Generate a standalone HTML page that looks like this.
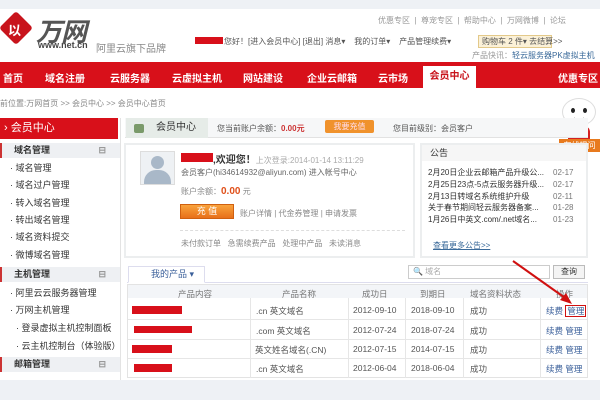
<!DOCTYPE html>
<html><head><meta charset="utf-8"><style>
*{margin:0;padding:0;box-sizing:border-box}
body{width:600px;height:400px;overflow:hidden;background:#fff;font-family:"Liberation Sans","Noto Sans CJK SC",sans-serif;font-size:9px;color:#444;position:relative}
.a{position:absolute;white-space:nowrap}
.nav span{position:absolute;top:70px;color:#fff;font-weight:bold;font-size:10px}
.side div{position:absolute;left:0;width:120px;height:17px;line-height:17px;padding-left:10px;font-size:9px;color:#333}
.side .h{background:#eef0f3;font-weight:bold;padding-left:12px;border-left:2px solid #c33;height:15px;line-height:15px}
.side .h:after{content:"⊟";position:absolute;right:14px;color:#999}
.red{background:#d8101a}
.th{position:absolute;top:288px;color:#777;font-size:8.5px}
.td{position:absolute;color:#555;font-size:8.5px}
.lk{color:#3a5f9a}
</style></head><body>
<div class="a" style="left:0;top:0;width:600px;height:9px;background:#eef1f5"></div>
<!-- logo -->
<div class="a" style="left:4px;top:16px;width:24px;height:24px;background:#c8141c;transform:rotate(45deg);border-radius:3px"></div>
<div class="a" style="left:8px;top:20px;color:#fff;font-weight:bold;font-size:13px">以</div>
<div class="a" style="left:36px;top:12px;font-size:26px;font-weight:bold;color:#555;font-style:italic;letter-spacing:-1px">万网</div>
<div class="a" style="left:38px;top:40px;font-size:9px;color:#444;font-weight:bold">www.net.cn</div>
<div class="a" style="left:96px;top:40px;font-size:10px;color:#888">阿里云旗下品牌</div>
<div class="a" style="left:378px;top:15px;font-size:8px;color:#999">优惠专区 &nbsp;|&nbsp; 尊宠专区 &nbsp;|&nbsp; 帮助中心 &nbsp;|&nbsp; 万网微博 &nbsp;|&nbsp; 论坛</div>
<div class="a red" style="left:195px;top:37px;width:28px;height:7px"></div>
<div class="a" style="left:224px;top:36px;font-size:8px;color:#555">您好！[进入会员中心] [退出] 消息▾ &nbsp;&nbsp; 我的订单▾ &nbsp;&nbsp; 产品管理续费▾</div>
<div class="a" style="left:478px;top:35px;width:74px;height:13px;background:#fbf1d8;border:1px solid #e3c98a;font-size:8px;line-height:11px;padding-left:3px;color:#555">购物车 2 件▾ 去结算&gt;&gt;</div>
<div class="a" style="left:472px;top:50px;font-size:8px;color:#999">产品快讯：<span style="color:#3a6a9a">轻云服务器PK虚拟主机</span></div>
<!-- nav -->
<div class="a nav red" style="left:0;top:62px;width:600px;height:26px"></div>
<div class="nav">
<span style="left:3px">首页</span><span style="left:45px">域名注册</span><span style="left:110px">云服务器</span><span style="left:172px">云虚拟主机</span><span style="left:243px">网站建设</span><span style="left:307px">企业云邮箱</span><span style="left:378px">云市场</span><span style="left:558px">优惠专区</span>
</div>
<div class="a" style="left:423px;top:66px;width:53px;height:22px;background:#fff;color:#c8141c;font-weight:bold;font-size:10px;text-align:center;line-height:22px">会员中心</div>
<div class="a" style="left:0;top:98px;font-size:8px;color:#888">前位置:万网首页 &gt;&gt; 会员中心 &gt;&gt; 会员中心首页</div>
<!-- mascot -->
<div class="a" style="left:562px;top:98px;width:34px;height:28px;background:#fff;border-radius:50%;border:1px solid #ddd"></div>
<div class="a" style="left:571px;top:108px;width:4px;height:5px;background:#222;border-radius:50%"></div>
<div class="a" style="left:583px;top:108px;width:4px;height:5px;background:#222;border-radius:50%"></div>
<div class="a" style="left:574px;top:117px;width:10px;height:4px;border-bottom:2px solid #222;border-radius:0 0 6px 6px"></div>
<div class="a" style="left:568px;top:126px;width:22px;height:15px;background:#d42020;border-radius:6px 6px 0 0"></div>
<div class="a" style="left:559px;top:139px;width:41px;height:13px;background:#e87a1e;color:#fff;font-size:8px;line-height:13px;text-align:center">在线提问</div>
<!-- sidebar -->
<div class="a red" style="left:0;top:118px;width:118px;height:21px;color:#fff;font-size:11px;line-height:21px;padding-left:4px">› 会员中心</div>
<div class="side">
<div class="h" style="top:143px">域名管理</div>
<div style="top:160px">· 域名管理</div>
<div style="top:177px">· 域名过户管理</div>
<div style="top:195px">· 转入域名管理</div>
<div style="top:212px">· 转出域名管理</div>
<div style="top:229px">· 域名资料提交</div>
<div style="top:247px">· 微博域名管理</div>
<div class="h" style="top:267px">主机管理</div>
<div style="top:285px">· 阿里云云服务器管理</div>
<div style="top:302px">· 万网主机管理</div>
<div style="top:320px;padding-left:16px">· 登录虚拟主机控制面板</div>
<div style="top:338px;padding-left:16px">· 云主机控制台（体验版）</div>
<div class="h" style="top:357px">邮箱管理</div>
</div>
<div class="a" style="left:120px;top:118px;width:1px;height:262px;background:#e3e3e3"></div>
<!-- top bar -->
<div class="a" style="left:125px;top:118px;width:463px;height:20px;background:#f6f7f8;border-bottom:1px solid #e2e2e2"></div>
<div class="a" style="left:126px;top:118px;width:82px;height:20px;background:#e6ece8;font-size:10px;line-height:20px;padding-left:30px;color:#333">会员中心</div>
<div class="a" style="left:134px;top:124px;width:10px;height:9px;background:#7a9a6a;border-radius:2px"></div>
<div class="a" style="left:217px;top:123px;font-size:8px;color:#555">您当前账户余额：<b style="color:#c33">0.00元</b></div>
<div class="a" style="left:325px;top:120px;width:49px;height:13px;background:#f0922c;border-radius:2px;color:#fde;font-size:8px;text-align:center;line-height:13px">我要充值</div>
<div class="a" style="left:393px;top:123px;font-size:8px;color:#555">您目前级别：会员客户</div>
<!-- welcome -->
<div class="a" style="left:124px;top:143px;width:291px;height:115px;border:2px solid #eceeef;background:#fff"></div>
<div class="a" style="left:140px;top:151px;width:35px;height:34px;border:1px solid #ddd;background:#eef1f4"></div>
<div class="a" style="left:151px;top:156px;width:13px;height:13px;background:#a9b8c8;border-radius:50%"></div>
<div class="a" style="left:144px;top:170px;width:27px;height:14px;background:#a9b8c8;border-radius:12px 12px 0 0"></div>
<div class="a red" style="left:181px;top:153px;width:32px;height:9px"></div>
<div class="a" style="left:213px;top:151px;font-size:10px;font-weight:bold;color:#333">,欢迎您！<span style="font-weight:normal;font-size:8px;color:#aaa">上次登录:2014-01-14 13:11:29</span></div>
<div class="a" style="left:181px;top:167px;font-size:8px;color:#666">会员客户(hi34614932@aliyun.com) 进入帐号中心</div>
<div class="a" style="left:181px;top:186px;font-size:8px;color:#888">账户余额：<b style="color:#e0501a;font-size:10px">0.00</b> 元</div>
<div class="a" style="left:180px;top:204px;width:54px;height:15px;background:linear-gradient(#f9a33c,#e8701a);border:1px solid #d06010;color:#fff;font-size:9px;text-align:center;line-height:13px">充 值</div>
<div class="a" style="left:240px;top:208px;font-size:8px;color:#888">账户详情 | 代金券管理 | 申请发票</div>
<div class="a" style="left:180px;top:230px;width:225px;border-top:1px dashed #ddd"></div>
<div class="a" style="left:181px;top:238px;font-size:8px;color:#888">未付款订单 &nbsp; 急需续费产品 &nbsp; 处理中产品 &nbsp; 未读消息</div>
<!-- announcements -->
<div class="a" style="left:420px;top:143px;width:168px;height:115px;border:2px solid #eceeef;background:#fff"></div>
<div class="a" style="left:422px;top:145px;width:164px;height:16px;background:#f6f6f6;font-size:9px;line-height:16px;padding-left:8px;color:#333">公告</div>
<div class="a" style="left:428px;top:167px;font-size:8px;color:#333;line-height:11.8px">2月20日企业云邮箱产品升级公...<br>2月25日23点-5点云服务器升级...<br>2月13日转域名系统维护升级<br>关于春节期间轻云服务器备案...<br>1月26日中英文.com/.net域名...</div>
<div class="a" style="left:553px;top:167px;font-size:8px;color:#777;line-height:11.8px">02-17<br>02-17<br>02-11<br>01-28<br>01-23</div>
<div class="a" style="left:433px;top:240px;font-size:8px;color:#3a6a9a;text-decoration:underline">查看更多公告&gt;&gt;</div>
<!-- products -->
<div class="a" style="left:127px;top:282px;width:461px;height:1px;background:#dde"></div>
<div class="a" style="left:128px;top:266px;width:77px;height:17px;border:1px solid #dde;border-bottom:1px solid #fff;background:#fff;font-size:9px;color:#3a5f9a;line-height:15px;padding-left:22px">我的产品 ▾</div>
<div class="a" style="left:408px;top:265px;width:142px;height:14px;border:1px solid #ccc;font-size:8px;color:#aaa;line-height:12px;padding-left:4px">🔍 域名</div>
<div class="a" style="left:553px;top:265px;width:32px;height:14px;border:1px solid #bbb;background:#f4f4f4;font-size:8px;color:#333;text-align:center;line-height:12px">查询</div>
<div class="a" style="left:127px;top:284px;width:461px;height:94px;border:1px solid #e3e3e3;background:#fff"></div>
<div class="a" style="left:128px;top:285px;width:459px;height:13px;background:#f3f5f8"></div>
<div class="th" style="left:178px">产品内容</div><div class="th" style="left:282px">产品名称</div><div class="th" style="left:362px">成功日</div><div class="th" style="left:420px">到期日</div><div class="th" style="left:470px">域名资料状态</div><div class="th" style="left:556px">操作</div>
<div class="a" style="left:128px;top:319px;width:459px;border-top:1px solid #e6e6e6"></div>
<div class="a" style="left:128px;top:339px;width:459px;border-top:1px solid #e6e6e6"></div>
<div class="a" style="left:128px;top:358px;width:459px;border-top:1px solid #e6e6e6"></div>
<div class="a" style="left:250px;top:298px;height:80px;border-left:1px solid #e6e6e6"></div>
<div class="a" style="left:348px;top:298px;height:80px;border-left:1px solid #e6e6e6"></div>
<div class="a" style="left:405px;top:298px;height:80px;border-left:1px solid #e6e6e6"></div>
<div class="a" style="left:463px;top:298px;height:80px;border-left:1px solid #e6e6e6"></div>
<div class="a" style="left:540px;top:298px;height:80px;border-left:1px solid #e6e6e6"></div>
<div class="a red" style="left:132px;top:306px;width:50px;height:8px"></div>
<div class="a red" style="left:134px;top:326px;width:58px;height:7px"></div>
<div class="a red" style="left:132px;top:345px;width:40px;height:8px"></div>
<div class="a red" style="left:134px;top:364px;width:38px;height:8px"></div>
<div class="td" style="left:256px;top:305px">.cn 英文域名</div><div class="td" style="left:256px;top:325px">.com 英文域名</div><div class="td" style="left:255px;top:344px">英文姓名域名(.CN)</div><div class="td" style="left:256px;top:363px">.cn 英文域名</div>
<div class="td" style="left:353px;top:305px">2012-09-10</div><div class="td" style="left:353px;top:325px">2012-07-24</div><div class="td" style="left:353px;top:344px">2012-07-15</div><div class="td" style="left:353px;top:363px">2012-06-04</div>
<div class="td" style="left:411px;top:305px">2018-09-10</div><div class="td" style="left:411px;top:325px">2018-07-24</div><div class="td" style="left:411px;top:344px">2014-07-15</div><div class="td" style="left:411px;top:363px">2018-06-04</div>
<div class="td" style="left:470px;top:305px">成功</div><div class="td" style="left:470px;top:325px">成功</div><div class="td" style="left:470px;top:344px">成功</div><div class="td" style="left:470px;top:363px">成功</div>
<div class="td lk" style="left:546px;top:305px">续费 <span style="border:1.5px solid #d01010;padding:0 1px">管理</span></div>
<div class="td lk" style="left:546px;top:325px">续费 管理</div><div class="td lk" style="left:546px;top:344px">续费 管理</div><div class="td lk" style="left:546px;top:363px">续费 管理</div>
<!-- arrow -->
<svg class="a" style="left:510px;top:258px" width="70" height="50"><line x1="3" y1="3" x2="58" y2="42" stroke="#d01010" stroke-width="2"/><polygon points="62,46 50,42 56,35" fill="#d01010"/></svg>
<div class="a" style="left:0;top:380px;width:600px;height:20px;background:#eef1f5"></div>
</body></html>
